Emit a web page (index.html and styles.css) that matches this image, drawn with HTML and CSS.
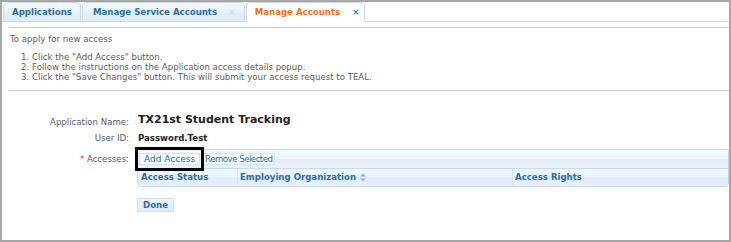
FILE: index.html
```html
<!DOCTYPE html>
<html>
<head>
<meta charset="utf-8">
<link rel="stylesheet" href="styles.css">
</head>
<body>
<div class="frame">
  <div class="tabs">
    <div class="tab">Applications</div>
    <div class="tab tab-wide">Manage Service Accounts<span class="close faded">×</span></div>
    <div class="tab active">Manage Accounts<span class="close">×</span></div>
  </div>
  <div class="content">
    <div class="instructions">
      <p class="intro">To apply for new access</p>
      <ol class="steps">
        <li>Click the "Add Access" button.</li>
        <li>Follow the instructions on the Application access details popup.</li>
        <li>Click the "Save Changes" button. This will submit your access request to TEAL.</li>
      </ol>
    </div>
    <div class="form">
      <div class="label row-app">Application Name:</div>
      <div class="value app-name row-app">TX21st Student Tracking</div>
      <div class="label row-user">User ID:</div>
      <div class="value user-id row-user">Password.Test</div>
      <div class="label label-access"><span class="req">*</span> Accesses:</div>
      <div class="grid-box">
        <div class="toolbar">
          <span class="highlight"><button class="btn btn-add">Add Access</button></span>
          <button class="btn btn-remove">Remove Selected</button>
        </div>
        <div class="head">
          <div class="col col-status">Access Status</div>
          <div class="col col-org">Employing Organization
            <svg class="sort" width="6" height="9" viewBox="0 0 6 9"><path d="M0 3.5 L3 0.5 L6 3.5 Z M0 5.5 L3 8.5 L6 5.5 Z" fill="#8db3d8"/></svg>
          </div>
          <div class="col col-rights">Access Rights</div>
        </div>
      </div>
      <div class="spacer"></div>
      <div class="actions"><button class="btn-done">Done</button></div>
    </div>
  </div>
</div>
</body>
</html>
```

FILE: styles.css
```css
* { box-sizing: border-box; }
html, body { margin: 0; padding: 0; background: #fff; }
.frame {
  width: 731px;
  height: 242px;
  border: 2px solid #a7a7a7;
  background: #fff;
  font-family: "DejaVu Sans", Verdana, sans-serif;
  font-size: 8.6px;
  line-height: 10px;
  color: #5c5c5c;
  overflow: hidden;
}
.tabs {
  display: flex;
  align-items: flex-end;
  gap: 1px;
  height: 20px;
  padding-left: 1px;
  border-bottom: 1px solid #c5dbec;
}
.tab {
  height: 20px;
  margin-bottom: -1px;
  padding: 0 8px;
  border: 1px solid #c5dbec;
  border-radius: 4px 4px 0 0;
  background: linear-gradient(#f3f8fd, #dde9f5);
  color: #2e6e9e;
  font-weight: bold;
  line-height: 18px;
  display: flex;
  align-items: center;
  white-space: nowrap;
}
.tab-wide { padding-left: 10px; }
.tab.active {
  background: #fff;
  border-bottom-color: #fff;
  color: #e8731c;
  padding-right: 4px;
}
.close {
  margin-left: 12px;
  font-size: 9px;
  font-weight: bold;
  color: #3c7dbd;
}
.close.faded { color: #cfdeec; margin-left: 11px; }
.content { padding-left: 7px; }
.instructions {
  margin-top: 5px;
  border-top: 1px solid #c9c9c9;
  border-bottom: 1px solid #c9c9c9;
  padding: 6px 0 8px 1px;
}
.intro { margin: 0; }
.steps { margin: 8px 0 0 0; padding-left: 22px; }
.form {
  display: grid;
  grid-template-columns: 120px 1fr;
  column-gap: 8px;
  padding-top: 22px;
}
.label { text-align: right; color: #5c5c5c; }
.value { padding-left: 1px; color: #222; font-weight: bold; }
.row-app { line-height: 14px; }
.app-name { font-size: 11px; }
.label.row-app { padding-top: 2px; }
.row-user { margin-top: 4px; }
.label-access { margin-top: 6px; padding-top: 5px; }
.req { color: #e0302a; }
.grid-box {
  margin-top: 6px;
  border: 1px solid #c5dbec;
  border-radius: 0 0 4px 4px;
}
.toolbar {
  display: flex;
  gap: 2px;
  height: 19px;
  padding: 3px 1px;
  background: linear-gradient(#f3f8fd 0%, #eef5fc 50%, #e5eef8 50%, #e9f2fb 100%);
  border-bottom: 1px solid #c5dbec;
}
.highlight { position: relative; display: inline-flex; }
.highlight::after {
  content: "";
  position: absolute;
  left: -4px;
  right: -4px;
  top: -6px;
  bottom: -6px;
  border: 3px solid #000;
}
.btn {
  height: 12px;
  margin: 0;
  border: 1px solid #d4e3f1;
  background: #f8fbfe;
  color: #2e6e9e;
  font-family: "DejaVu Sans", Verdana, sans-serif;
  line-height: 10px;
  cursor: pointer;
}
.btn-add { font-size: 9px; padding: 0 4px; }
.btn-remove { font-size: 8.6px; letter-spacing: -0.5px; padding: 0 2px; color: #2e6e9e; }
.head {
  display: flex;
  height: 17px;
  background: linear-gradient(#eef5fc 0%, #eaf3fc 50%, #e1edf8 50%, #e6f0fa 100%);
  border-radius: 0 0 4px 4px;
}
.col {
  padding-left: 3px;
  line-height: 17px;
  color: #2e6e9e;
  font-weight: bold;
  border-right: 1px solid #d3e3f2;
  display: flex;
  align-items: center;
  gap: 4px;
  white-space: nowrap;
}
.col-status { width: 100px; }
.col-org { width: 275px; padding-left: 2px; }
.col-rights { flex: 1; border-right: none; padding-left: 2px; }
.sort { display: block; }
.actions { margin-top: 11px; }
.btn-done {
  height: 14px;
  padding: 0 5px;
  border: 1px solid #cfe0f0;
  background: linear-gradient(#edf4fc, #dfebf8);
  color: #2e6e9e;
  font-family: "DejaVu Sans", Verdana, sans-serif;
  font-size: 8.6px;
  font-weight: bold;
  line-height: 12px;
}
```
